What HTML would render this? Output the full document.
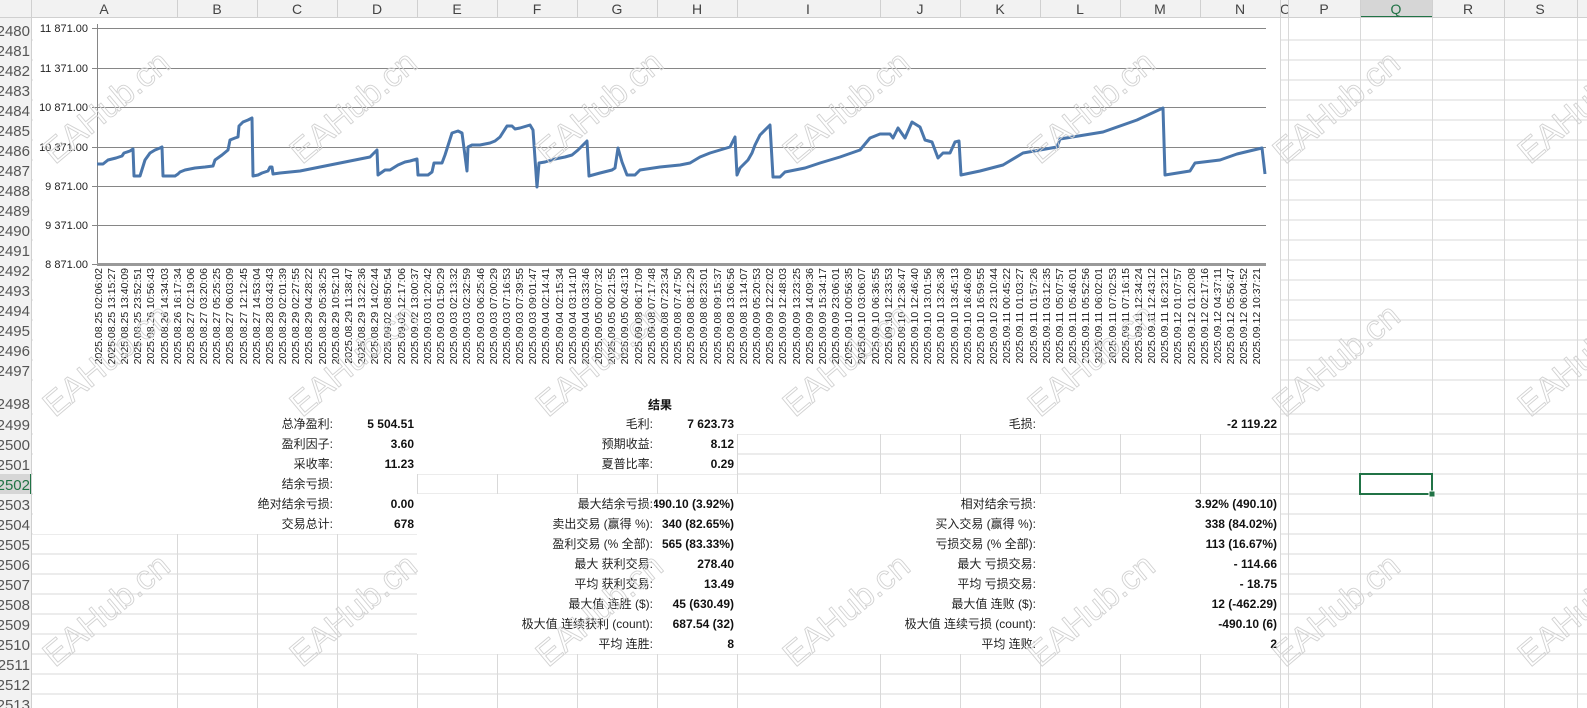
<!DOCTYPE html>
<html><head><meta charset="utf-8"><style>
html,body{margin:0;padding:0;background:#fff;width:1587px;height:708px;overflow:hidden}
svg{display:block}
.hd{font-family:"Liberation Sans","Noto Sans CJK SC",sans-serif;font-size:14px;fill:#444}
.rn{font-family:"Liberation Sans",sans-serif;font-size:15px;fill:#555;text-anchor:end}
.ya{font-family:"Liberation Sans",sans-serif;font-size:11px;fill:#222;text-anchor:end}
.xl text{font-family:"Liberation Sans",sans-serif;font-size:10.5px;fill:#222;text-anchor:end}
.lb{font-family:"Liberation Sans","Noto Sans CJK SC",sans-serif;font-size:12px;fill:#222;text-anchor:end}
.vb{font-family:"Liberation Sans","Noto Sans CJK SC",sans-serif;font-size:12px;font-weight:bold;fill:#111;text-anchor:end}
.wm text{font-family:"Liberation Sans",sans-serif;font-size:34px;fill:none;stroke:#d2d2d2;stroke-width:0.9}
</style></head><body>
<svg width="1587" height="708" viewBox="0 0 1587 708" xmlns="http://www.w3.org/2000/svg">
<g stroke="#d9d9d9" stroke-width="1" fill="none">
<path d="M32 40H1587M32 60H1587M32 80H1587M32 100H1587M32 120H1587M32 140H1587M32 160H1587M32 180H1587M32 200H1587M32 220H1587M32 240H1587M32 260H1587M32 280H1587M32 300H1587M32 320H1587M32 340H1587M32 360H1587M32 380H1587M32 414H1587M32 434H1587M32 454H1587M32 474H1587M32 494H1587M32 514H1587M32 534H1587M32 554H1587M32 574H1587M32 594H1587M32 614H1587M32 634H1587M32 654H1587M32 674H1587M32 694H1587"/>
<path d="M177.5 18V708M257.5 18V708M337.5 18V708M417.5 18V708M497.5 18V708M577.5 18V708M657.5 18V708M737.5 18V708M880.5 18V708M960.5 18V708M1040.5 18V708M1120.5 18V708M1200.5 18V708M1280.5 18V708M1288.5 18V708M1360.5 18V708M1432.5 18V708M1504.5 18V708M1577.5 18V708"/>
</g>
<g fill="#fff">
<rect x="33" y="18" width="1247" height="362"/>
<rect x="33" y="380" width="1247" height="54"/>
<rect x="33" y="434" width="704" height="40"/>
<rect x="33" y="474" width="384" height="20"/>
<rect x="33" y="494" width="1247" height="40"/>
<rect x="417" y="534" width="863" height="120"/>
</g>
<rect x="0" y="0" width="1587" height="18" fill="#f2f2f2"/>
<rect x="0" y="0" width="32" height="708" fill="#f2f2f2"/>
<rect x="1360" y="0" width="72" height="18" fill="#d6d6d6"/>
<rect x="1360" y="16" width="72" height="2" fill="#217346"/>
<rect x="0" y="474" width="32" height="20" fill="#d6d6d6"/>
<rect x="30" y="474" width="2" height="20" fill="#217346"/>
<g stroke="#d0d0d0"><path d="M0 17.5H1587M31.5 0V708M177.5 0V18M257.5 0V18M337.5 0V18M417.5 0V18M497.5 0V18M577.5 0V18M657.5 0V18M737.5 0V18M880.5 0V18M960.5 0V18M1040.5 0V18M1120.5 0V18M1200.5 0V18M1280.5 0V18M1288.5 0V18M1360.5 0V18M1432.5 0V18M1504.5 0V18M1577.5 0V18"/></g>
<g class="hd" text-anchor="middle">
<text x="104" y="14">A</text><text x="217" y="14">B</text><text x="297" y="14">C</text><text x="377" y="14">D</text><text x="457" y="14">E</text><text x="537" y="14">F</text><text x="617" y="14">G</text><text x="697" y="14">H</text><text x="808" y="14">I</text><text x="920" y="14">J</text><text x="1000" y="14">K</text><text x="1080" y="14">L</text><text x="1160" y="14">M</text><text x="1240" y="14">N</text><text x="1324" y="14">P</text><text x="1396" y="14" fill="#217346">Q</text><text x="1468" y="14">R</text><text x="1540" y="14">S</text>
</g>
<svg x="1281" y="0" width="7" height="18"><text x="-1" y="14" class="hd">O</text></svg>
<g class="rn">
<text x="30" y="36">2480</text><text x="30" y="56">2481</text><text x="30" y="76">2482</text><text x="30" y="96">2483</text><text x="30" y="116">2484</text><text x="30" y="136">2485</text><text x="30" y="156">2486</text><text x="30" y="176">2487</text><text x="30" y="196">2488</text><text x="30" y="216">2489</text><text x="30" y="236">2490</text><text x="30" y="256">2491</text><text x="30" y="276">2492</text><text x="30" y="296">2493</text><text x="30" y="316">2494</text><text x="30" y="336">2495</text><text x="30" y="356">2496</text><text x="30" y="376">2497</text><text x="30" y="409">2498</text><text x="30" y="430">2499</text><text x="30" y="450">2500</text><text x="30" y="470">2501</text><text x="30" y="490" fill="#217346">2502</text><text x="30" y="510">2503</text><text x="30" y="530">2504</text><text x="30" y="550">2505</text><text x="30" y="570">2506</text><text x="30" y="590">2507</text><text x="30" y="610">2508</text><text x="30" y="630">2509</text><text x="30" y="650">2510</text><text x="30" y="670">2511</text><text x="30" y="690">2512</text><text x="30" y="710">2513</text>
</g>
<g stroke="#868686" stroke-width="1">
<path d="M92 28.5H1266M92 68.5H1266M92 107.5H1266M92 147.5H1266M92 186.5H1266M92 225.5H1266"/>
<path d="M97.5 24V265M92 264.5H97"/>
</g>
<path d="M97 264.5H1266" stroke="#999" stroke-width="3"/>
<g class="ya">
<text x="88" y="32">11 871.00</text><text x="88" y="72">11 371.00</text><text x="88" y="111">10 871.00</text><text x="88" y="151">10 371.00</text><text x="88" y="190">9 871.00</text><text x="88" y="229">9 371.00</text><text x="88" y="268">8 871.00</text>
</g>
<polyline fill="none" stroke="#4a76ab" stroke-width="3" stroke-linejoin="round" points="97,164 103,164 108,160 116,158 122,156 124,153 130,151 133,149 134,176 140,176 145,160 150,153 155,150 160,148 162,147 163,176 175,176 178,174 180,172 185,170 195,168 205,167 213,166 215,160 222,155 228,150 230,140 235,138 238,137 239,126 243,122 248,120 252,118 253,176 258,175 262,173 268,171 270,167 272,167 273,174 280,173 290,172 300,171 310,169 320,167 330,165 340,163 350,161 360,159 370,157 377,150 378,175 385,170 390,170 398,165 405,162 410,161 417,159 418,175 428,175 432,172 434,163 442,163 445,155 452,133 458,131 462,133 467,171 468,147 472,145 480,145 490,143 495,141 500,137 507,126 512,126 515,129 520,128 530,125 533,130 537,187 539,163 545,162 555,159 565,157 572,155 578,150 587,141 589,176 600,173 612,170 615,168 618,148 622,162 627,175 635,175 640,170 660,167 680,165 690,163 700,157 710,153 720,150 730,147 735,137 737,175 740,168 745,163 748,160 752,153 755,145 760,135 770,125 773,177 780,177 785,172 795,170 805,168 820,163 840,157 860,150 870,138 880,134 890,134 893,138 898,128 905,138 912,122 920,127 925,140 932,142 938,158 943,153 950,153 955,142 959,141 961,175 980,171 1003,165 1023,153 1057,147 1060,139 1103,132 1137,120 1163,108 1165,175 1190,171 1195,163 1220,160 1237,154 1262,148 1265,174"/>
<g class="xl">
<text transform="translate(102,268) rotate(-90)">2025.08.25 02:06:02</text>
<text transform="translate(115,268) rotate(-90)">2025.08.25 13:15:27</text>
<text transform="translate(128,268) rotate(-90)">2025.08.25 13:40:09</text>
<text transform="translate(141,268) rotate(-90)">2025.08.25 23:52:51</text>
<text transform="translate(154,268) rotate(-90)">2025.08.26 10:56:43</text>
<text transform="translate(168,268) rotate(-90)">2025.08.26 14:34:03</text>
<text transform="translate(181,268) rotate(-90)">2025.08.26 16:17:34</text>
<text transform="translate(194,268) rotate(-90)">2025.08.27 02:19:06</text>
<text transform="translate(207,268) rotate(-90)">2025.08.27 03:20:06</text>
<text transform="translate(220,268) rotate(-90)">2025.08.27 05:25:25</text>
<text transform="translate(233,268) rotate(-90)">2025.08.27 06:03:09</text>
<text transform="translate(247,268) rotate(-90)">2025.08.27 12:12:45</text>
<text transform="translate(260,268) rotate(-90)">2025.08.27 14:53:04</text>
<text transform="translate(273,268) rotate(-90)">2025.08.28 03:43:43</text>
<text transform="translate(286,268) rotate(-90)">2025.08.29 02:01:39</text>
<text transform="translate(299,268) rotate(-90)">2025.08.29 02:27:55</text>
<text transform="translate(312,268) rotate(-90)">2025.08.29 04:28:22</text>
<text transform="translate(326,268) rotate(-90)">2025.08.29 05:36:25</text>
<text transform="translate(339,268) rotate(-90)">2025.08.29 10:52:10</text>
<text transform="translate(352,268) rotate(-90)">2025.08.29 11:38:47</text>
<text transform="translate(365,268) rotate(-90)">2025.08.29 13:22:36</text>
<text transform="translate(378,268) rotate(-90)">2025.08.29 14:02:44</text>
<text transform="translate(391,268) rotate(-90)">2025.09.02 08:50:54</text>
<text transform="translate(405,268) rotate(-90)">2025.09.02 12:17:06</text>
<text transform="translate(418,268) rotate(-90)">2025.09.02 13:00:37</text>
<text transform="translate(431,268) rotate(-90)">2025.09.03 01:20:42</text>
<text transform="translate(444,268) rotate(-90)">2025.09.03 01:50:29</text>
<text transform="translate(457,268) rotate(-90)">2025.09.03 02:13:32</text>
<text transform="translate(470,268) rotate(-90)">2025.09.03 02:32:59</text>
<text transform="translate(484,268) rotate(-90)">2025.09.03 06:25:46</text>
<text transform="translate(497,268) rotate(-90)">2025.09.03 07:00:29</text>
<text transform="translate(510,268) rotate(-90)">2025.09.03 07:16:53</text>
<text transform="translate(523,268) rotate(-90)">2025.09.03 07:39:55</text>
<text transform="translate(536,268) rotate(-90)">2025.09.03 09:01:47</text>
<text transform="translate(549,268) rotate(-90)">2025.09.04 02:14:41</text>
<text transform="translate(563,268) rotate(-90)">2025.09.04 02:15:34</text>
<text transform="translate(576,268) rotate(-90)">2025.09.04 03:14:10</text>
<text transform="translate(589,268) rotate(-90)">2025.09.04 03:33:46</text>
<text transform="translate(602,268) rotate(-90)">2025.09.05 00:07:32</text>
<text transform="translate(615,268) rotate(-90)">2025.09.05 00:21:55</text>
<text transform="translate(628,268) rotate(-90)">2025.09.05 00:43:13</text>
<text transform="translate(642,268) rotate(-90)">2025.09.08 06:17:09</text>
<text transform="translate(655,268) rotate(-90)">2025.09.08 07:17:48</text>
<text transform="translate(668,268) rotate(-90)">2025.09.08 07:23:34</text>
<text transform="translate(681,268) rotate(-90)">2025.09.08 07:47:50</text>
<text transform="translate(694,268) rotate(-90)">2025.09.08 08:12:29</text>
<text transform="translate(707,268) rotate(-90)">2025.09.08 08:23:01</text>
<text transform="translate(721,268) rotate(-90)">2025.09.08 09:15:37</text>
<text transform="translate(734,268) rotate(-90)">2025.09.08 13:06:56</text>
<text transform="translate(747,268) rotate(-90)">2025.09.08 13:14:07</text>
<text transform="translate(760,268) rotate(-90)">2025.09.09 05:20:53</text>
<text transform="translate(773,268) rotate(-90)">2025.09.09 12:22:02</text>
<text transform="translate(786,268) rotate(-90)">2025.09.09 12:48:03</text>
<text transform="translate(800,268) rotate(-90)">2025.09.09 13:23:25</text>
<text transform="translate(813,268) rotate(-90)">2025.09.09 14:09:36</text>
<text transform="translate(826,268) rotate(-90)">2025.09.09 15:34:17</text>
<text transform="translate(839,268) rotate(-90)">2025.09.09 23:06:01</text>
<text transform="translate(852,268) rotate(-90)">2025.09.10 00:56:35</text>
<text transform="translate(865,268) rotate(-90)">2025.09.10 03:06:07</text>
<text transform="translate(879,268) rotate(-90)">2025.09.10 06:36:55</text>
<text transform="translate(892,268) rotate(-90)">2025.09.10 12:33:53</text>
<text transform="translate(905,268) rotate(-90)">2025.09.10 12:36:47</text>
<text transform="translate(918,268) rotate(-90)">2025.09.10 12:46:40</text>
<text transform="translate(931,268) rotate(-90)">2025.09.10 13:01:56</text>
<text transform="translate(944,268) rotate(-90)">2025.09.10 13:26:36</text>
<text transform="translate(958,268) rotate(-90)">2025.09.10 13:45:13</text>
<text transform="translate(971,268) rotate(-90)">2025.09.10 16:46:09</text>
<text transform="translate(984,268) rotate(-90)">2025.09.10 16:59:55</text>
<text transform="translate(997,268) rotate(-90)">2025.09.10 23:10:44</text>
<text transform="translate(1010,268) rotate(-90)">2025.09.11 00:45:22</text>
<text transform="translate(1023,268) rotate(-90)">2025.09.11 01:03:27</text>
<text transform="translate(1037,268) rotate(-90)">2025.09.11 01:57:26</text>
<text transform="translate(1050,268) rotate(-90)">2025.09.11 03:12:35</text>
<text transform="translate(1063,268) rotate(-90)">2025.09.11 05:07:57</text>
<text transform="translate(1076,268) rotate(-90)">2025.09.11 05:46:01</text>
<text transform="translate(1089,268) rotate(-90)">2025.09.11 05:52:56</text>
<text transform="translate(1102,268) rotate(-90)">2025.09.11 06:02:01</text>
<text transform="translate(1116,268) rotate(-90)">2025.09.11 07:02:53</text>
<text transform="translate(1129,268) rotate(-90)">2025.09.11 07:16:15</text>
<text transform="translate(1142,268) rotate(-90)">2025.09.11 12:34:24</text>
<text transform="translate(1155,268) rotate(-90)">2025.09.11 12:43:12</text>
<text transform="translate(1168,268) rotate(-90)">2025.09.11 16:23:12</text>
<text transform="translate(1181,268) rotate(-90)">2025.09.12 01:07:57</text>
<text transform="translate(1195,268) rotate(-90)">2025.09.12 01:20:08</text>
<text transform="translate(1208,268) rotate(-90)">2025.09.12 02:17:16</text>
<text transform="translate(1221,268) rotate(-90)">2025.09.12 04:37:11</text>
<text transform="translate(1234,268) rotate(-90)">2025.09.12 05:56:47</text>
<text transform="translate(1247,268) rotate(-90)">2025.09.12 06:04:52</text>
<text transform="translate(1260,268) rotate(-90)">2025.09.12 10:37:21</text>
</g>
<text x="660" y="409" class="vb" style="text-anchor:middle">结果</text>
<g class="lb">
<text x="333" y="428">总净盈利:</text><text x="333" y="448">盈利因子:</text><text x="333" y="468">采收率:</text><text x="333" y="488">结余亏损:</text><text x="333" y="508">绝对结余亏损:</text><text x="333" y="528">交易总计:</text>
<text x="653" y="428">毛利:</text><text x="653" y="448">预期收益:</text><text x="653" y="468">夏普比率:</text><text x="653" y="508">最大结余亏损:</text><text x="653" y="528">卖出交易 (赢得 %):</text><text x="653" y="548">盈利交易 (% 全部):</text><text x="653" y="568">最大 获利交易:</text><text x="653" y="588">平均 获利交易:</text><text x="653" y="608">最大值 连胜 ($):</text><text x="653" y="628">极大值 连续获利 (count):</text><text x="653" y="648">平均 连胜:</text>
<text x="1036" y="428">毛损:</text><text x="1036" y="508">相对结余亏损:</text><text x="1036" y="528">买入交易 (赢得 %):</text><text x="1036" y="548">亏损交易 (% 全部):</text><text x="1036" y="568">最大 亏损交易:</text><text x="1036" y="588">平均 亏损交易:</text><text x="1036" y="608">最大值 连败 ($):</text><text x="1036" y="628">极大值 连续亏损 (count):</text><text x="1036" y="648">平均 连败:</text>
</g>
<g class="vb">
<text x="414" y="428">5 504.51</text><text x="414" y="448">3.60</text><text x="414" y="468">11.23</text><text x="414" y="508">0.00</text><text x="414" y="528">678</text>
<text x="734" y="428">7 623.73</text><text x="734" y="448">8.12</text><text x="734" y="468">0.29</text>
<text x="734" y="528">340 (82.65%)</text><text x="734" y="548">565 (83.33%)</text><text x="734" y="568">278.40</text><text x="734" y="588">13.49</text><text x="734" y="608">45 (630.49)</text><text x="734" y="628">687.54 (32)</text><text x="734" y="648">8</text>
<text x="1277" y="428">-2 119.22</text><text x="1277" y="508">3.92% (490.10)</text><text x="1277" y="528">338 (84.02%)</text><text x="1277" y="548">113 (16.67%)</text><text x="1277" y="568">- 114.66</text><text x="1277" y="588">- 18.75</text><text x="1277" y="608">12 (-462.29)</text><text x="1277" y="628">-490.10 (6)</text><text x="1277" y="648">2</text>
</g>
<svg x="654" y="494" width="83" height="20"><text x="80" y="14" class="vb">490.10 (3.92%)</text></svg>
<rect x="1360" y="474" width="72" height="20" fill="none" stroke="#217346" stroke-width="2"/>
<rect x="1429" y="491" width="6" height="6" fill="#217346" stroke="#fff" stroke-width="1"/>
<g class="wm">
<text transform="translate(55,165) rotate(-40)">EAHub.cn</text>
<text transform="translate(302,165) rotate(-40)">EAHub.cn</text>
<text transform="translate(548,165) rotate(-40)">EAHub.cn</text>
<text transform="translate(795,165) rotate(-40)">EAHub.cn</text>
<text transform="translate(1040,165) rotate(-40)">EAHub.cn</text>
<text transform="translate(1285,165) rotate(-40)">EAHub.cn</text>
<text transform="translate(1530,165) rotate(-40)">EAHub.cn</text>
<text transform="translate(55,418) rotate(-40)">EAHub.cn</text>
<text transform="translate(302,418) rotate(-40)">EAHub.cn</text>
<text transform="translate(548,418) rotate(-40)">EAHub.cn</text>
<text transform="translate(795,418) rotate(-40)">EAHub.cn</text>
<text transform="translate(1040,418) rotate(-40)">EAHub.cn</text>
<text transform="translate(1285,418) rotate(-40)">EAHub.cn</text>
<text transform="translate(1530,418) rotate(-40)">EAHub.cn</text>
<text transform="translate(55,668) rotate(-40)">EAHub.cn</text>
<text transform="translate(302,668) rotate(-40)">EAHub.cn</text>
<text transform="translate(548,668) rotate(-40)">EAHub.cn</text>
<text transform="translate(795,668) rotate(-40)">EAHub.cn</text>
<text transform="translate(1040,668) rotate(-40)">EAHub.cn</text>
<text transform="translate(1285,668) rotate(-40)">EAHub.cn</text>
<text transform="translate(1530,668) rotate(-40)">EAHub.cn</text>
</g>
</svg>
</body></html>
